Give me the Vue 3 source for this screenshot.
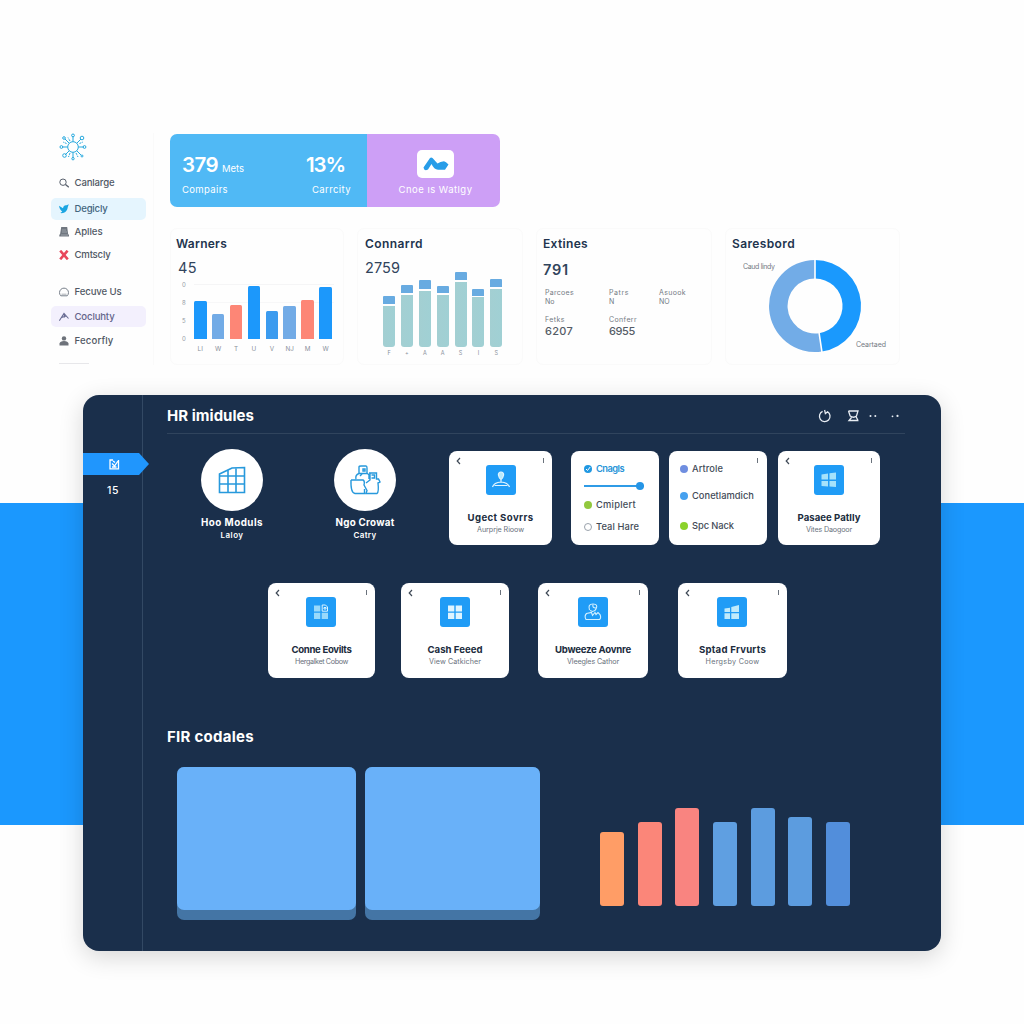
<script setup>
const primaryNav = [
  { label: 'Canlarge', icon: 'search', width: 40 },
  { label: 'Degicly', icon: 'bird', width: 33, tone: 'active' },
  { label: 'Aplles', icon: 'doc', width: 28 },
  { label: 'Cmtscly', icon: 'cross', width: 36 },
]
const secondaryNav = [
  { label: 'Fecuve Us', icon: 'ring', width: 47 },
  { label: 'Cocluhty', icon: 'peak', width: 40, tone: 'soft' },
  { label: 'Fecorfly', icon: 'person', width: 39 },
]
const warnerBars = [
  { h: 38.5, c: '#1c98fb', l: 'LI' },
  { h: 25.5, c: '#72abe6', l: 'W' },
  { h: 34, c: '#fd8676', l: 'T' },
  { h: 53, c: '#1c98fb', l: 'U' },
  { h: 28, c: '#3b9bef', l: 'V' },
  { h: 33, c: '#72abe6', l: 'NJ' },
  { h: 39.5, c: '#fd8676', l: 'M' },
  { h: 52.5, c: '#1c98fb', l: 'W' },
]
const connBars = [
  { top: 8, base: 41, l: 'F' },
  { top: 8.5, base: 52, l: '+' },
  { top: 9, base: 56, l: 'A' },
  { top: 7.5, base: 52, l: 'A' },
  { top: 8.5, base: 65, l: 'S' },
  { top: 7, base: 49.5, l: 'I' },
  { top: 8, base: 58, l: 'S' },
]
const stats = [
  { l: 'Parcoes', v: 'No', w: 29 },
  { l: 'Patrs', v: 'N', w: 20 },
  { l: 'Asuook', v: 'NO', w: 27 },
]
const rowTwo = [
  { title: 'Conne Eovilts', sub: 'Hergalket Cobow', icon: 'winp', w: 60, s: 53 },
  { title: 'Cash Feeed', sub: 'View Catkicher', icon: 'win', w: 55, s: 52 },
  { title: 'Ubweeze Aovnre', sub: 'Vleegles Cathor', icon: 'hand', w: 76, s: 52 },
  { title: 'Sptad Frvurts', sub: 'Hergsby Coow', icon: 'wint', w: 67, s: 54 },
]
const loadBars = [
  { h: 74.5, c: '#ff9d66' },
  { h: 84.5, c: '#fb8679' },
  { h: 98, c: '#f98480' },
  { h: 84.5, c: '#5f9fe1' },
  { h: 98.5, c: '#5c9cdf' },
  { h: 89, c: '#5c9cdf' },
  { h: 84.5, c: '#528edb' },
]

/* Tracks a label so that it spans the given width in px. */
const vFit = (el, { value }) => {
  requestAnimationFrame(() => {
    el.style.letterSpacing = '0px'
    const natural = el.getBoundingClientRect().width
    el.style.letterSpacing = `${(value - natural) / el.textContent.trim().length}px`
  })
}
</script>

<template>
  <div class="page">
    <div class="overview">
      <nav class="side">
        <svg class="logo" viewBox="0 0 28 28" fill="none" stroke="#27a9de" stroke-width="1">
          <circle cx="14" cy="14" r="5.3" />
          <path d="M14 8.700V3M14 19.300V25M8.700 14H3M19.300 14H25M10.200 10.200L6 6M17.800 10.200L22 6M10.200 17.800L6 22M17.800 17.800L22 22" />
          <path d="M7.500 10.500L4 9M20.500 10.500L24 9M11 20L9.500 24M17 20l2 4M11 8L9 4.500" stroke-dasharray="2 1" />
          <circle cx="14" cy="2.400" r="1.400" /><circle cx="2.400" cy="14" r="1.400" />
          <circle cx="25.500" cy="14" r="1.400" /><circle cx="5" cy="5" r="1.300" />
          <circle cx="23" cy="5" r="1.800" /><circle cx="5.500" cy="22.500" r="1.800" />
          <circle cx="23" cy="23" r="1" /><circle cx="14" cy="25.700" r="1.200" />
        </svg>
        <template v-for="(group, g) in [primaryNav, secondaryNav]" :key="g">
          <div class="nav-group" :class="'g' + g">
            <a v-for="n in group" :key="n.label" class="nav-item" :class="n.tone">
              <svg viewBox="0 0 10 10" fill="none">
                <g v-if="n.icon === 'search'" stroke="#59616d"><circle cx="4" cy="4.200" r="3.200" /><path d="M6.500 6.500L9.800 9.300" stroke-width="1.300" /></g>
                <path v-else-if="n.icon === 'bird'" fill="#1aa5e2" d="M0 1.800L4 4.300C4.300 2 6 .700 7.600 1.300L9.800.300 8.800 3C8.500 7 5.200 9.800 1.300 9L3.300 7.400C1.500 6.500.500 4.500 0 1.800z" />
                <g v-else-if="n.icon === 'doc'"><path fill="#707780" d="M2.200 0h6l1 7.500H10V9.500H.300V7.500H1z" /><path d="M3 3h4M3 5h5M2 8h7" stroke="#aeb4ba" stroke-width=".7" /></g>
                <path v-else-if="n.icon === 'cross'" stroke="#e8475c" stroke-width="2.600" d="M1.200.700L8.800 9.300M8.600.700L1.200 9.300" />
                <g v-else-if="n.icon === 'ring'" stroke="#777f8a"><path d="M1.800 8.800A4.500 4.500 0 1 1 8.200 8.800z" /><path d="M2.500 7.200h5" stroke-width=".6" /></g>
                <path v-else-if="n.icon === 'peak'" stroke="#686b93" stroke-width="1.100" d="M.300 8.800L5 1.500 9.500 6.500M5.200 1.500L5.500 5.500M2.600 5.500L7 4" />
                <g v-else fill="#6d727a"><circle cx="5" cy="2.400" r="2.200" /><path d="M.500 9.600V7.500Q1 5 5 5T9.500 7.500V9.600z" /></g>
              </svg>
              <span v-fit="n.width">{{ n.label }}</span>
            </a>
          </div>
        </template>
        <i class="side-rule"></i>
      </nav>

      <main class="main">
        <section class="banner">
          <div class="banner-blue">
            <div class="metric">
              <p class="big"><b v-fit="36">379</b><small v-fit="22">Mets</small></p>
              <p class="cap"><span v-fit="46">Compairs</span></p>
            </div>
            <div class="metric second">
              <p class="big"><b v-fit="39">13%</b></p>
              <p class="cap"><span v-fit="39">Carrcity</span></p>
            </div>
          </div>
          <div class="banner-pink">
            <div class="chip">
              <svg viewBox="0 0 26 14"><path fill="#289de8" d="M.500 10.500L7 1Q8.200-.200 9.500 1L14.500 6.500 17.500 5 21 4.300 23 5.300 25.500 7.500 22 12.800H15Q11 12.500 8.500 7L5 12.500Q1 14.500.500 10.500z" /></svg>
            </div>
            <p class="cap"><span v-fit="74">Cnoe ıs Watlgy</span></p>
          </div>
        </section>

        <section class="cards">
          <article class="card">
            <h3><span v-fit="51">Warners</span></h3>
            <p class="num"><span v-fit="19">45</span></p>
            <div class="warn">
              <div class="axis"><i>0</i><i>8</i><i>5</i><i>0</i></div>
              <div class="plot">
                <div v-for="(b, i) in warnerBars" :key="i" class="col">
                  <div class="bar" :style="{ height: b.h + 'px', background: b.c }"></div>
                  <i>{{ b.l }}</i>
                </div>
              </div>
            </div>
          </article>

          <article class="card">
            <h3><span v-fit="58">Connarrd</span></h3>
            <p class="num"><span v-fit="35">2759</span></p>
            <div class="conn">
              <div v-for="(b, i) in connBars" :key="i" class="col">
                <div class="cap-bar" :style="{ height: b.top + 'px' }"></div>
                <div class="base-bar" :style="{ height: b.base + 'px' }"></div>
                <i>{{ b.l }}</i>
              </div>
            </div>
          </article>

          <article class="card ext">
            <h3><span v-fit="45">Extines</span></h3>
            <p class="num strong"><span v-fit="26">791</span></p>
            <div class="stat-grid">
              <div v-for="s in stats" :key="s.l"><span v-fit="s.w">{{ s.l }}</span><br />{{ s.v }}</div>
            </div>
            <div class="stat-grid low">
              <div><span v-fit="20">Fetks</span><b v-fit="28">6207</b></div>
              <div><span v-fit="28">Conferr</span><b v-fit="26">6955</b></div>
            </div>
          </article>

          <article class="card donut-card">
            <h3><span v-fit="63">Saresbord</span></h3>
            <svg class="donut" viewBox="725 254 175 104">
              <path fill="#1a99fd" d="M815 260a46 46 0 0 1 6.800 91.500l-2.700-18.300A27.500 27.500 0 0 0 815 278.500z" />
              <path fill="#72ace7" d="M815 260a46 46 0 1 0 6.800 91.500l-2.700-18.300A27.500 27.500 0 1 1 815 278.500z" />
              <path stroke="#fff" stroke-width="1.600" d="M815 258v22M818.800 331l3.300 22" />
              <text x="743" y="268.500" textLength="32">Caud lindy</text>
              <text x="856" y="346.500" textLength="30">Ceartaed</text>
            </svg>
          </article>
        </section>
      </main>
    </div>

    <section class="panel">
      <aside class="rail">
        <div class="flag">
          <svg viewBox="0 0 11 11" fill="none" stroke="#fff" stroke-width="1.300"><path d="M4 1H1V9.800H9.500V1M3 4.500L5.500 7 9 2M3 8H7.500M4 2l2 1.500" /></svg>
        </div>
        <p><span v-fit="12">15</span></p>
      </aside>

      <div class="content">
        <header>
          <h2><span v-fit="87">HR imidules</span></h2>
          <svg class="tools" viewBox="0 0 84 14" fill="none" stroke="#e8edf3" stroke-width="1.300">
            <path d="M4.600 2.400A5.300 5.300 0 1 0 9.600 2.800L7.400 4.600 6.600 1" />
            <path d="M30.500 2H40L38.500 7Q35.500 9.500 32.200 7L30.500 2M33.500 8.500L31 11.500H40.500M38 7.500L40 11.500" />
            <g fill="#e8edf3" stroke="none"><circle cx="52.500" cy="7" r="1" /><circle cx="57.300" cy="7" r="1" /><circle cx="74.500" cy="7.300" r=".9" /><circle cx="79.500" cy="6.900" r="1.100" /></g>
          </svg>
        </header>

        <div class="row-one">
          <div class="round">
            <div class="disc">
              <svg viewBox="0 0 28 28" fill="none" stroke="#2799dc" stroke-width="1.600"><path d="M1.500 8L12 3 14 2 26.500 1.500V26.500H1.500zM1.500 10H26.500M1.500 18H26.500M10 4V26.500M18 2V26.500" /></svg>
            </div>
            <b><span v-fit="62">Hoo Moduls</span></b><small><span v-fit="23">Laloy</span></small>
          </div>
          <div class="round">
            <div class="disc">
              <svg class="wide" viewBox="0 0 32 30" fill="none" stroke="#2799dc" stroke-width="1.400"><path d="M2 15Q1.500 28 6 28.500H15.500V24M2 15H14Q16 16 15 20L18 25.500 17 28.500H28Q30 27 29 18L31 17 29.500 14H27.500V8H21V15L17 18M7 14Q6 10 10 8.500V2Q10 1 12 1H17Q18 1 18 3V8L20 10V14M10 8.500H18M14 4h2v2h-2zM11 11l2-2M22.500 10h3v3h-3M20 8h5" /></svg>
            </div>
            <b><span v-fit="59">Ngo Crowat</span></b><small><span v-fit="23">Catry</span></small>
          </div>

          <div class="tile">
            <div class="tile-top"><svg viewBox="0 0 5 8"><path d="M4 1L1.200 4 4 7" /></svg><i></i></div>
            <div class="glyph"><svg viewBox="0 0 20 18" fill="none" stroke="#e3f5ff" stroke-width="1.200"><path fill="#b9e9fb" d="M10 1a2.600 2.600 0 0 1 2.600 3Q12 7.500 10 8.500 8 7.500 7.400 4A2.600 2.600 0 0 1 10 1z" /><path d="M10 8.500V11Q3 11.500 1.500 16M10 11Q17 11.500 18.500 16M3.500 14.500H16.500" /></svg></div>
            <b><span v-fit="66">Ugect Sovrrs</span></b><small><span v-fit="47">Aurprje Rioow</span></small>
          </div>

          <div class="tile steps">
            <p class="link"><svg viewBox="0 0 8 8"><circle cx="4" cy="4" r="4" fill="#2098e2" /><path d="M2 4L3.500 5.500 6.200 2" fill="none" stroke="#fff" /></svg><span v-fit="28">Cnagls</span></p>
            <div class="slider"><i></i></div>
            <p class="mid"><em class="dot green"></em><span v-fit="40">Cmiplert</span></p>
            <p><em class="dot open"></em><span v-fit="43">Teal Hare</span></p>
          </div>

          <div class="tile legend">
            <i class="more"></i>
            <p><em class="dot violet"></em><span v-fit="31">Artrole</span></p>
            <p><em class="dot sky"></em><span v-fit="62">Conetlamdich</span></p>
            <p><em class="dot lime"></em><span v-fit="42">Spc Nack</span></p>
          </div>

          <div class="tile">
            <div class="tile-top"><svg viewBox="0 0 5 8"><path d="M4 1L1.200 4 4 7" /></svg><i></i></div>
            <div class="glyph"><svg viewBox="0 0 20 18" fill="#a5e2fb"><path d="M2.500 3.500L9 2.500V8.500H2.500zM10.500 2.300L17 1.500V8.500H10.500zM2.500 10H9V15.500L2.500 15zM10.500 10H17V16L10.500 15.500z" /></svg></div>
            <b><span v-fit="63">Pasaee Patlly</span></b><small><span v-fit="46">Vites Daogoor</span></small>
          </div>
        </div>

        <div class="row-two">
          <div v-for="t in rowTwo" :key="t.title" class="tile">
            <div class="tile-top"><svg viewBox="0 0 5 8"><path d="M4 1L1.200 4 4 7" /></svg><i></i></div>
            <div class="glyph">
              <svg viewBox="0 0 20 18" fill="#b7e8fc">
                <g v-if="t.icon === 'winp'"><path opacity=".8" d="M3 2.500H9.300V8.500H3zM3 9.800H9.300V16H3zM10.700 9.800H17V16H10.700z" /><path fill="none" stroke="#dcf4ff" d="M11.200 2H14.500L16.500 4V8.200H11.200zM13 4.500h2v1.500h-2z" /></g>
                <path v-else-if="t.icon === 'win'" fill="#dff4ff" d="M3 2.500H9.300V8.500H3zM10.700 2.500H17V8.500H10.700zM3 9.800H9.300V16H3zM10.700 9.800H17V16H10.700z" />
                <path v-else-if="t.icon === 'wint'" fill="#bfeafb" d="M2.500 5.500L8 4.700V9H2.500zM9.300 4L17 2V9H9.300zM2.500 10.300H8V16H2.500zM9.300 10.300H17V16H9.300z" />
                <path v-else fill="none" stroke="#d5f1ff" stroke-width="1.100" d="M6.500 7Q4.500 1 10 1T13 6Q12 8.500 9.500 8.500L7 7.500M10 1.500Q9 5 13 5M3 16.500Q1 13 3.500 10.500L8.500 9.500 9.500 12.500 12 9.500 13 11.500 15 9.500 17 11.500Q18.500 15 16.500 16.500z" />
              </svg>
            </div>
            <b><span v-fit="t.w">{{ t.title }}</span></b><small><span v-fit="t.s">{{ t.sub }}</span></small>
          </div>
        </div>

        <h2 class="lower-title"><span v-fit="87">FIR codales</span></h2>
        <div class="lower">
          <div class="block"><i></i></div>
          <div class="block"><i></i></div>
          <div class="load">
            <div v-for="(b, i) in loadBars" :key="i" :style="{ height: b.h + 'px', background: b.c }"></div>
          </div>
        </div>
      </div>
    </section>
  </div>
</template>

<style>
body { margin: 0; background: #fefefe; }
</style>

<style scoped>
* { box-sizing: border-box; }
p, h2, h3 { margin: 0; }
i, em { font-style: normal; }
span, b, small { white-space: nowrap; }
span, .big b, .big small { display: inline-block; }
.page {
  width: 1024px; height: 1024px; overflow: hidden;
  padding-top: 133px;
  font-family: Inter, 'Open Sans', sans-serif;
  color: #22344e;
  background: linear-gradient(#1b98fe, #1b98fe) 0 503px / 1024px 322px no-repeat #fefefe;
}
.overview { display: flex; height: 262px; padding-left: 51px; }
.side { width: 103px; border-right: 1px solid #fafafa; height: 232px; display: flex; flex-direction: column; }
.logo { width: 28px; height: 28px; margin-left: 8px; flex: none; }
.nav-group { display: flex; flex-direction: column; width: 95px; }
.g0 { margin-top: 11px; }
.g1 { margin-top: 15px; }
.nav-item { height: 22px; display: flex; align-items: center; gap: 5.500px; padding-left: 8px; border-radius: 5px; font-size: 9.6px; font-weight: 500; line-height: 22px; color: #505864; }
.nav-item svg { width: 10px; height: 10px; flex: none; }
.g0 .nav-item:nth-child(1) { margin-bottom: 4px; }
.g0 .nav-item:nth-child(3) { margin-top: 1px; }
.g0 .nav-item:nth-child(4) { margin-top: 1px; }
.g1 .nav-item:nth-child(2) { margin-top: 3px; }
.g1 .nav-item:nth-child(3) { margin-top: 3px; }
.nav-item.active { background: #e5f5fe; color: #43667e; }
.nav-item.soft { background: #f3f0fd; color: #64658b; height: 21px; }
.side-rule { width: 30px; height: 1px; background: #e7e7ea; margin: 11px 0 0 8px; flex: none; }

.main { margin-left: 16px; width: 731px; }
.banner { margin-top: 1px; width: 330px; height: 73px; display: flex; border-radius: 7px; overflow: hidden; color: #fff; }
.banner-blue { width: 197px; background: #50b9f5; display: flex; padding: 17px 0 0 12px; }
.metric { width: 124px; }
.big { height: 27px; line-height: 27px; white-space: nowrap; }
.big b { font-size: 20.5px; font-weight: 600; }
.big small { font-size: 9.500px; margin-left: 4px; }
.cap { height: 24px; line-height: 24px; font-size: 9.5px; }
.metric.second { width: 61px; }
.metric.second .cap { padding-left: 6px; }
.banner-pink { flex: 1; background: #cd9ff6; display: flex; flex-direction: column; align-items: center; padding-top: 16px; padding-left: 4px; }
.chip { width: 37px; height: 28px; border-radius: 5px; background: #fff; display: flex; align-items: center; justify-content: center; }
.chip svg { width: 26px; height: 14px; }

.cards { margin-top: 21px; display: grid; grid-template-columns: 174px 166px 176px 175px; column-gap: 13px; height: 137px; }
.card { border: 1px solid #fafafa; border-radius: 7px; padding: 5px 0 0 5px; }
.card:nth-child(2) { padding-left: 7px; }
.card h3 { font-size: 12px; font-weight: 600; line-height: 20px; height: 20px; color: #22344e; }
.num { font-size: 14.5px; line-height: 22px; height: 22px; margin-top: 3px; padding-left: 2px; color: #31445c; }
.card:nth-child(2) .num { padding-left: 0; }
.num.strong { font-weight: 600; margin-top: 5px; padding-left: 0; }
.warn { display: flex; height: 75px; }
.axis { width: 18px; padding-left: 6px; display: flex; flex-direction: column; justify-content: space-between; height: 62px; margin-top: 2px; font-size: 6px; line-height: 8px; color: #9299a3; }
.plot { width: 140px; display: flex; gap: 5.4px; align-items: flex-end; background: linear-gradient(#f5f5f6, #f5f5f6) 0 5px / 100% 1px no-repeat, linear-gradient(#f7f7f8, #f7f7f8) 0 23px / 100% 1px no-repeat; }
.col { display: flex; flex-direction: column; align-items: center; width: 12.500px; flex: none; }
.col i { font-size: 6.3px; line-height: 10px; height: 10px; color: #8a919c; }
.bar { width: 12.500px; border-radius: 1.500px 1.500px 0 0; margin-bottom: 5px; }
.conn { height: 78.500px; display: flex; align-items: flex-end; gap: 5.900px; padding-left: 18px; }
.conn .col { width: 12px; }
.conn .col i { font-size: 5.5px; height: 11px; line-height: 12px; }
.cap-bar { width: 12px; background: #68abe1; border-radius: 1px 1px 0 0; margin-bottom: 1.500px; }
.base-bar { width: 12px; background: linear-gradient(90deg, #a3cfd2, #a0d0d4); border-radius: 0 0 3px 3px; }
.ext { padding-left: 6px; }
.stat-grid { display: grid; grid-template-columns: 64px 50px 1fr; margin-top: 7px; padding-left: 2px; font-size: 7px; line-height: 9px; color: #747b84; }
.stat-grid.low { margin-top: 9px; }
.stat-grid b { display: inline-block; font-size: 11px; line-height: 15px; font-weight: 500; color: #555c66; }
.low div { display: flex; flex-direction: column; align-items: flex-start; }
.donut-card { padding-left: 6px; padding-top: 5px; }
.donut { width: 175px; height: 104px; display: block; margin-left: -7px; }
.donut text { font-size: 7px; fill: #737a83; }

.panel { position: relative; width: 858px; height: 556px; margin-left: 83px; border-radius: 16px; background: #1a2f4b; display: flex; box-shadow: 0 6px 24px rgba(0, 0, 0, 0.16); }
.rail { width: 60px; border-right: 1px solid #334964; padding-top: 58px; color: #fff; flex: none; }
.flag { width: 66px; height: 22px; background: #2096fd; clip-path: polygon(0 0, 56px 0, 100% 50%, 56px 100%, 0 100%); display: flex; align-items: center; padding-left: 26px; }
.flag svg { width: 11px; height: 11px; }
.rail p { font-size: 10.5px; font-weight: 500; line-height: 20px; margin: 6px 0 0 24px; }
.content { flex: 1; padding-left: 24px; }
header { width: 738px; height: 39px; border-bottom: 1px solid #30445d; display: flex; justify-content: space-between; padding-top: 10px; }
h2 { font-size: 15px; font-weight: 700; line-height: 22px; height: 22px; color: #fff; }
.tools { width: 84px; height: 14px; margin: 4px 3px 0 0; }
.row-one { display: grid; grid-template-columns: 66px 67px 66px 50px 103px 19px 88px 10px 98px 11px 102px; height: 95px; margin: 16.500px 0 0 33px; }
.row-one > :nth-child(1) { grid-column: 1; }
.row-one > :nth-child(2) { grid-column: 3; }
.row-one > :nth-child(3) { grid-column: 5; }
.row-one > :nth-child(4) { grid-column: 7; }
.row-one > :nth-child(5) { grid-column: 9; }
.row-one > :nth-child(6) { grid-column: 11; }
.round { display: flex; flex-direction: column; align-items: center; color: #fff; margin: -2px 1px 0 -1px; }
.disc { width: 62px; height: 62px; border-radius: 50%; background: #fff; display: flex; align-items: center; justify-content: center; flex: none; }
.disc svg { width: 28px; height: 28px; }
.disc svg.wide { width: 32px; height: 30px; }
.round b { font-size: 9.800px; line-height: 14px; margin-top: 5px; }
.round small { font-size: 8px; font-weight: 600; line-height: 11px; }
.tile { position: relative; background: #fff; border-radius: 8px; display: flex; flex-direction: column; align-items: center; }
.row-one .tile { height: 94px; }
.tile-top { width: 100%; display: flex; justify-content: space-between; padding: 6px 8px 0 7px; height: 14px; }
.tile-top svg { width: 5px; height: 8px; fill: none; stroke: #3e4956; stroke-width: 1.200; }
.tile-top i, .more { width: 1.200px; height: 5.500px; background: #6a727c; margin-top: 1px; }
.glyph { width: 30px; height: 30px; border-radius: 3px; background: #209cf6; display: flex; align-items: center; justify-content: center; }
.glyph svg { width: 20px; height: 18px; }
.tile b { font-size: 9.600px; line-height: 14px; margin-top: 16px; color: #202c3d; }
.tile small { font-size: 7.200px; line-height: 9px; color: #6a727d; }
.steps, .legend { align-items: flex-start; padding-left: 13px; font-size: 9.300px; font-weight: 500; color: #434b57; }
.steps p, .legend p { display: flex; align-items: center; gap: 4px; height: 14px; line-height: 14px; }
.steps { padding-top: 11px; }
.steps .link { color: #2793d8; font-weight: 600; }
.link svg { width: 8px; height: 8px; }
.slider { width: 60px; height: 2px; background: #2f9be6; margin: 9px 0 11px; display: flex; justify-content: flex-end; align-items: center; }
.slider i { width: 8px; height: 8px; border-radius: 50%; background: #2595e6; flex: none; }
.steps .mid { margin-bottom: 8px; }
.dot { width: 8px; height: 8px; border-radius: 50%; flex: none; }
.green { background: #92c83e; }
.open { border: 1px solid #9aa2ac; }
.violet { background: #6f8ee0; }
.sky { background: #46a1ef; }
.lime { background: #8bd22b; }
.legend { padding: 11px 0 0 11px; }
.legend p:nth-of-type(2) { margin-top: 13px; }
.legend p:nth-of-type(3) { margin-top: 16px; }
.more { position: absolute; right: 9px; top: 6px; }
.row-two { display: grid; grid-template-columns: 133px 137px 140px 109px; height: 95px; margin: 37px 0 0 101px; }
.row-two .tile { width: 107px; }
.row-two .tile:nth-child(2) { width: 108px; }
.row-two .tile:nth-child(3) { width: 110px; }
.row-two .glyph { margin-right: 1px; }
.row-two .tile:nth-child(4) { width: 109px; }
.lower-title { margin-top: 48px; }
.lower { display: flex; margin: 19px 0 0 10px; height: 153px; }
.block { width: 178.500px; height: 153px; border-radius: 7px; background: #4475a5; }
.block:nth-child(2) { width: 175px; margin-left: 9.500px; }
.block i { display: block; height: 143px; border-radius: 7px; background: #69b1f9; }
.load { margin-left: 60px; height: 139.500px; display: flex; align-items: flex-end; gap: 13.700px; }
.load div { width: 24px; border-radius: 3px; }
</style>
